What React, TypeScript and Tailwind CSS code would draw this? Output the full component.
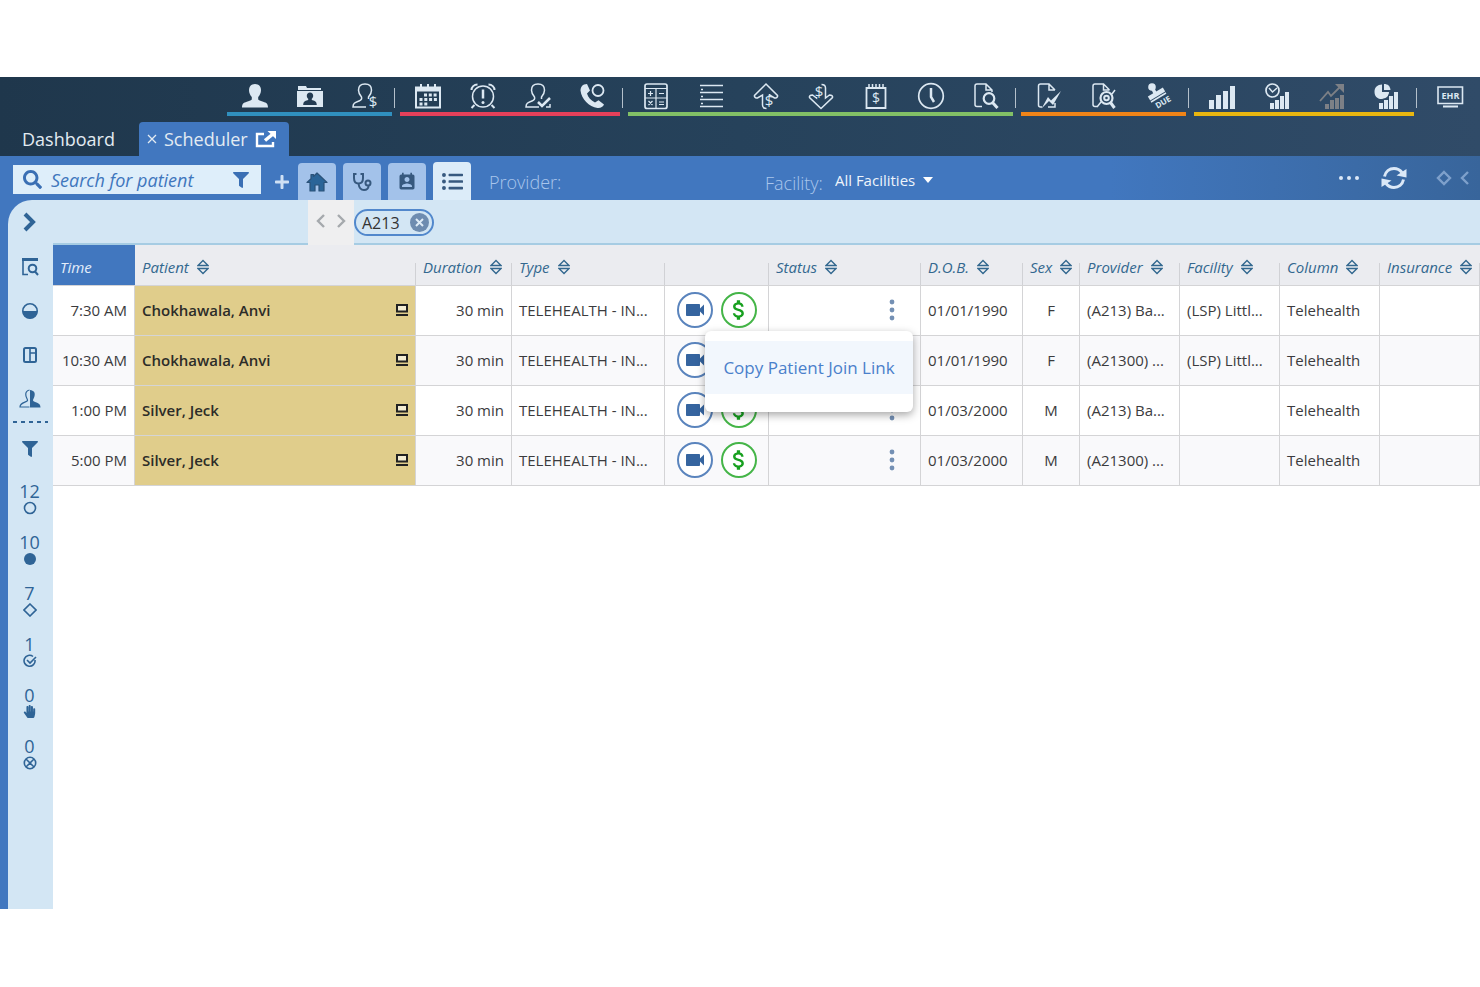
import type { ReactNode } from 'react';
import { FaFilter, FaHandPaper, FaListUl, FaPlus, FaSearch } from 'react-icons/fa';
import { MdAttachMoney, MdPermContactCalendar, MdVideocam } from 'react-icons/md';

type NavItem = { label: string; icon: ReactNode; dim?: boolean };
type NavGroup = { line: string; items: NavItem[] };

type Appointment = {
  time: string;
  patient: string;
  dob: string;
  sex: string;
  provider: string;
  facility: string;
};

const outlinePerson = 'M14 2c-4 0-6.500 2.500-6.500 6.200c0 3 1.500 5 3 6.800c.5 1.500 0 3-2.500 4c-4 1.500-6 2-6 6h13';
const outlinePersonRight = 'M14 2c4 0 6.500 2.500 6.500 6.200c0 3-1.500 5-3 6.800v2';

function Dollar({ x, y, size = 14 }: { x: number; y: number; size?: number }) {
  return (
    <text x={x} y={y} fontSize={size} textAnchor="middle" fill="currentColor" stroke="none">
      $
    </text>
  );
}

function Bars({ x = 6, y = 26, w = 3, step = 5, heights }: { x?: number; y?: number; w?: number; step?: number; heights: number[] }) {
  return (
    <>
      {heights.map((h, i) => (
        <rect key={i} x={x + i * step} y={y - h} width={w} height={h} fill="currentColor" stroke="none" />
      ))}
    </>
  );
}

const groups: NavGroup[] = [
  {
    line: 'border-[#3090bf]',
    items: [
      {
        label: 'Patient',
        icon: (
          <path
            fill="currentColor"
            stroke="none"
            d="M14 2c-4 0-6 2.800-6 6.200c0 3 1.300 5 2.800 6.800v2.500c-1 1-3 1.500-5 2.200c-3.300 1-4.800 2-4.800 5.800h26c0-3.800-1.500-4.800-4.800-5.800c-2-.7-4-1.200-5-2.200V15c1.500-1.800 2.800-3.800 2.800-6.800C20 4.800 18 2 14 2z"
          />
        ),
      },
      {
        label: 'Patient folder',
        icon: (
          <>
            <path fill="currentColor" stroke="none" d="M2 7V4h8l1 2h14v2H2zM1 9h26v16H1z" />
            <path fill="#233c53" stroke="none" d="M14 10.500c-2 0-3.200 1.300-3.200 3.200c0 1.500.6 2.300 1.400 3v1.300c-2 .6-5 1-5 5h13.600c0-4-3-4.400-5-5v-1.300c.7-.7 1.400-1.500 1.400-3c0-1.900-1.200-3.200-3.200-3.200z" />
          </>
        ),
      },
      {
        label: 'Patient balance',
        icon: (
          <>
            <path d={outlinePerson} />
            <path d={outlinePersonRight} />
            <Dollar x={22} y={25} size={15} />
          </>
        ),
      },
    ],
  },
  {
    line: 'border-[#e5405a]',
    items: [
      {
        label: 'Calendar',
        icon: (
          <>
            <path d="M2 5.500h24v20H2z" strokeWidth="2" />
            <path d="M2 7.500h24" strokeWidth="4" />
            <path d="M7 2v5M14 2v5M21 2v5" strokeWidth="2" />
            <path d="M10 13h13M5.500 17.500h17.500M5.500 22h8" strokeWidth="3" strokeDasharray="3 1.800" />
          </>
        ),
      },
      {
        label: 'Reminders',
        icon: (
          <>
            <circle cx="14" cy="14.500" r="10.500" />
            <path d="M2.500 8c0-3 2.500-5.500 6-5.500M25.500 8c0-3-2.500-5.500-6-5.500M5.500 23l-3 3M22.500 23l3 3" strokeWidth="2" />
            <path d="M14 7.500v9" strokeWidth="2.500" />
            <circle cx="14" cy="20.500" r="1.500" fill="currentColor" stroke="none" />
          </>
        ),
      },
      {
        label: 'Check in',
        icon: (
          <>
            <path d={outlinePerson} />
            <path d={outlinePersonRight} />
            <path d="M14 20l4 4l8-8" strokeWidth="2.500" />
            <path d="M22 25h4v-3" />
          </>
        ),
      },
      {
        label: 'Calls',
        icon: (
          <>
            <path
              fill="currentColor"
              stroke="none"
              d="M5 2.500c-2.500 1-3.500 3.500-3.500 6C2.500 17 10 25 18.500 26c3 .3 5.500-1 6.500-3.500l-5.500-4.300l-3.500 2.300C12 18.500 9 15.500 8 11.500l3-3L8 2z"
            />
            <circle cx="19" cy="8.500" r="5.500" strokeWidth="1.800" />
          </>
        ),
      },
    ],
  },
  {
    line: 'border-[#82c066]',
    items: [
      {
        label: 'Charges',
        icon: (
          <>
            <rect x="3" y="2" width="22" height="24.500" rx="2" strokeWidth="1.700" />
            <path d="M3 6.500h22M14 6.500v20M3 16h22M6 11.500h5M8.500 9v5M17 11.500h5M6.500 19l4 4M10.500 19l-4 4M17 20h5M17 22.500h5" strokeWidth="1.200" />
          </>
        ),
      },
      {
        label: 'Ledger',
        icon: (
          <>
            <path d="M3 3.500h23M3 10.500h23M3 17.500h23M3 24.500h23" strokeWidth="1.700" />
            <path d="M4 7.500h2M4 14.500h2M4 21.500h2" strokeWidth="1.500" />
          </>
        ),
      },
      {
        label: 'Credits',
        icon: (
          <>
            <path d="M14.500 26.500c-3 0-4-1-4-3.500v-10l-5 3c-2 0-3.500-1-3-2.500L14 2l11.500 11.500c.5 1.500-1 2.500-3 2.500l-5-3v-1" />
            <Dollar x={17} y={24} size={15} />
          </>
        ),
      },
      {
        label: 'Debits',
        icon: (
          <>
            <path d="M14.500 2.500c3 0 4 1 4 3.500v10l4-3c2 0 3.500 1 3 2.500L14 26.500L2.500 15.500c-.5-1.500 1-2.500 3-2.500l4 3v-1" />
            <Dollar x={12} y={15} size={15} />
          </>
        ),
      },
      {
        label: 'Statements',
        icon: (
          <>
            <path d="M4.500 6h19v20h-19z" strokeWidth="1.800" />
            <path d="M7 2v5M10.500 2v5M14 2v5M17.500 2v5M21 2v5" />
            <Dollar x={14} y={21} size={14} />
          </>
        ),
      },
      {
        label: 'Time clock',
        icon: (
          <>
            <circle cx="14" cy="14" r="12.300" strokeWidth="1.700" />
            <path d="M14 6v9l3 5" strokeWidth="2.500" />
          </>
        ),
      },
      {
        label: 'Find claim',
        icon: (
          <>
            <path d="M10 24.500H5c-1.500 0-2-.5-2-2V4c0-1.500.5-2 2-2h9l6 6v2M14 2v6h6" />
            <circle cx="17" cy="16.500" r="5.300" strokeWidth="2.200" />
            <path d="M20.500 20.500l5 5.500" strokeWidth="3" />
          </>
        ),
      },
    ],
  },
  {
    line: 'border-[#f08418]',
    items: [
      {
        label: 'Edit claim',
        icon: (
          <>
            <path d="M7 25H5.500c-1.500 0-2-.5-2-2V4c0-1.500.5-2 2-2H14l6 6M14 2v6h6M13 25h7v-4" />
            <path fill="currentColor" stroke="none" d="M6.500 26.500l6.500-11.500l3 3.500L26 9l-8 14l-4-4z" />
          </>
        ),
      },
      {
        label: 'Track claim',
        icon: (
          <>
            <path d="M7 24.500H5c-1.500 0-2-.5-2-2V4c0-1.500.5-2 2-2h8.500l6 6M13.500 2v6h6M7 25l4-5M22 12l3-4" />
            <circle cx="16.500" cy="16" r="6" strokeWidth="2.200" />
            <circle cx="16.500" cy="16" r="2.300" strokeWidth="2" />
            <path d="M20.500 20.500l4 5.500" strokeWidth="3" />
          </>
        ),
      },
      {
        label: 'Amount due',
        icon: (
          <>
            <circle cx="7" cy="5" r="3.800" fill="currentColor" stroke="none" />
            <path d="M8 7l3 6" strokeWidth="3.500" />
            <path d="M4 16.500L19 7.500" strokeWidth="4.500" />
            <path d="M6 20L21 11" strokeWidth="1.500" />
            <text x="18" y="23" fontSize="8" fontWeight="700" textAnchor="middle" fill="currentColor" stroke="none" transform="rotate(-31 18 20)">
              DUE
            </text>
          </>
        ),
      },
    ],
  },
  {
    line: 'border-[#e9b610]',
    items: [
      { label: 'Reports', icon: <Bars x={1} y={27} w={5} step={7} heights={[9, 14, 18, 23]} /> },
      {
        label: 'Scheduled reports',
        icon: (
          <>
            <circle cx="9.500" cy="8.500" r="6.500" strokeWidth="1.700" />
            <path d="M6 6l3.500 4L14 6" />
            <Bars x={7} y={27} w={4} step={5} heights={[6, 9, 13, 17]} />
          </>
        ),
      },
      {
        label: 'Trends',
        dim: true,
        icon: (
          <>
            <Bars x={7} y={27} w={4} step={5} heights={[5, 9, 11, 14]} />
            <path d="M2 19l8-9l3 4L23 4" strokeWidth="1.800" />
            <path d="M17 2h9v9z" fill="currentColor" stroke="none" />
          </>
        ),
      },
      {
        label: 'Analytics',
        icon: (
          <>
            <path fill="currentColor" stroke="none" d="M9 2.500v7.500h7c0 4-3 7-7.500 7s-7-3-7-7.300S4.500 2.500 9 2.500z" />
            <path fill="currentColor" stroke="none" d="M11 2c4 0 6 2 6.500 6H11z" />
            <path stroke="#2c4864" strokeWidth="1" d="M10.500 18.500v-1.500h5v-4h5v-4" />
            <Bars x={6} y={27} w={4} step={5} heights={[6, 9, 13, 17]} />
          </>
        ),
      },
    ],
  },
];

const columns = [
  { label: 'Time', width: 'w-[82px]' },
  { label: 'Patient', width: 'w-[281px]' },
  { label: 'Duration', width: 'w-[96px]' },
  { label: 'Type', width: 'w-[153px]' },
  { label: '', width: 'w-[104px]' },
  { label: 'Status', width: 'w-[152px]' },
  { label: 'D.O.B.', width: 'w-[102px]' },
  { label: 'Sex', width: 'w-[57px]' },
  { label: 'Provider', width: 'w-[100px]' },
  { label: 'Facility', width: 'w-[100px]' },
  { label: 'Column', width: 'w-[100px]' },
  { label: 'Insurance', width: 'w-[100px]' },
];

const appointments: Appointment[] = [
  { time: '7:30 AM', patient: 'Chokhawala, Anvi', dob: '01/01/1990', sex: 'F', provider: '(A213) Ba...', facility: '(LSP) Littl...' },
  { time: '10:30 AM', patient: 'Chokhawala, Anvi', dob: '01/01/1990', sex: 'F', provider: '(A21300) ...', facility: '(LSP) Littl...' },
  { time: '1:00 PM', patient: 'Silver, Jeck', dob: '01/03/2000', sex: 'M', provider: '(A213) Ba...', facility: '' },
  { time: '5:00 PM', patient: 'Silver, Jeck', dob: '01/03/2000', sex: 'M', provider: '(A21300) ...', facility: '' },
];

const counters: { label: string; count: number; icon: ReactNode }[] = [
  { label: 'Scheduled', count: 12, icon: <circle cx="7" cy="7" r="5.500" /> },
  { label: 'Arrived', count: 10, icon: <circle cx="7" cy="7" r="6" fill="currentColor" stroke="none" /> },
  { label: 'In room', count: 7, icon: <path d="M7 1l6 6l-6 6l-6-6z" /> },
  { label: 'Completed', count: 1, icon: <path d="M12 6A5.500 5.500 0 1 1 10 2.500M4 6l3 3l6-6" /> },
  { label: 'On hold', count: 0, icon: <FaHandPaper size={13} stroke="none" /> },
  { label: 'Cancelled', count: 0, icon: <path d="M7 1.300a5.700 5.700 0 1 0 0 11.400a5.700 5.700 0 1 0 0-11.400M3.500 3.500l7 7M10.500 3.500l-7 7" /> },
];

function NavButton({ item }: { item: NavItem }) {
  return (
    <button aria-label={item.label} className={`w-[55px] h-8 grid place-items-center ${item.dim ? 'text-[#7d8086]' : 'text-[#dce8f2]'}`}>
      <svg width="28" height="28" viewBox="0 0 28 28" fill="none" stroke="currentColor" strokeWidth="1.500" className="overflow-visible">
        {item.icon}
      </svg>
    </button>
  );
}

function Divider() {
  return (
    <div className="w-2 pl-0.5 pt-[11px]">
      <div className="w-px h-5 bg-[#b4c0cb]" />
    </div>
  );
}

function SortIcon() {
  return (
    <svg width="12" height="16" viewBox="0 0 12 16" fill="none" stroke="currentColor" strokeWidth="1.400" className="shrink-0">
      <path d="M1 6.500L6 1.500l5 5zM1 9.500l5 5l5-5z" />
    </svg>
  );
}

function SideButton({ label, children }: { label: string; children: ReactNode }) {
  return (
    <button aria-label={label} className="h-11 w-full pr-0.5 grid place-items-center">
      <svg width="22" height="22" viewBox="0 0 22 22" fill="none" stroke="currentColor" strokeWidth="1.600">
        {children}
      </svg>
    </button>
  );
}

function TopBar() {
  return (
    <header className="bg-linear-to-r from-[#1f374c] via-[#26425b] to-[#304b68]">
      <nav className="flex justify-end h-[39px] pr-[3px]">
        {groups.map((group) => (
          <div key={group.line} className="flex">
            <div className={`flex pt-[3px] border-b-4 ${group.line}`}>
              {group.items.map((item) => (
                <NavButton key={item.label} item={item} />
              ))}
            </div>
            <Divider />
          </div>
        ))}
        <button aria-label="EHR" className="w-[55px] h-[38px] grid place-items-center text-[#dce8f2]">
          <svg width="28" height="28" viewBox="0 0 28 28" fill="none" stroke="currentColor" strokeWidth="1.600">
            <path d="M2 5h24.500v16.500H2z" />
            <path d="M7 24.500h15" strokeWidth="2" />
            <text x="14.500" y="16.500" fontSize="9" fontWeight="700" textAnchor="middle" fill="currentColor" stroke="none">
              EHR
            </text>
          </svg>
        </button>
      </nav>
      <div className="flex items-end h-10 pl-[22px] text-lg leading-6 text-[#e3ebf2]">
        <button className="h-[34px] w-[117px] text-left">Dashboard</button>
        <div className="flex items-center h-[34px] w-[150px] px-2 bg-[#4177bf] rounded-t-sm">
          <button aria-label="Close Scheduler" className="mr-[7px]">
            <svg width="10" height="10" viewBox="0 0 10 10" stroke="currentColor" strokeWidth="1.300">
              <path d="M1 1l8 8M9 1L1 9" />
            </svg>
          </button>
          <button>Scheduler</button>
          <button aria-label="Open in new window" className="ml-auto mr-1 text-white">
            <svg width="22" height="18" viewBox="0 0 22 18" fill="none" stroke="currentColor" strokeWidth="2.400">
              <path d="M9 4H2v12h16v-4" />
              <path d="M10 10.500L18 4" strokeWidth="3.500" />
              <path d="M12.500 1h8.500v8z" fill="currentColor" stroke="none" />
            </svg>
          </button>
        </div>
      </div>
    </header>
  );
}

function Toolbar() {
  return (
    <div className="flex items-end h-11 pl-[13px] pr-2.5 text-white">
      <div className="self-start mt-[9px] flex items-center w-[248px] h-[29px] pl-2.5 pr-3 bg-[#deeefa] text-[#3a6fb4]">
        <FaSearch size={19} className="shrink-0" />
        <input
          aria-label="Search for patient"
          placeholder="Search for patient"
          className="flex-1 min-w-0 ml-[9px] text-lg leading-6 italic outline-none placeholder:text-[#3f76bd]"
        />
        <button aria-label="Filter patients">
          <FaFilter size={16} />
        </button>
      </div>
      <button aria-label="Add" className="w-[37px] h-9 pl-1 grid place-items-center text-[#cfe0f4]">
        <FaPlus size={16} />
      </button>
      <div className="flex items-end gap-[7px] text-[#37597f]">
        <button aria-label="Home" className="w-[38px] h-[37px] grid place-items-center rounded-t-sm bg-[#a3c2ea]">
          <svg width="22" height="22" viewBox="0 0 22 22" fill="#2a6498" stroke="#2b5279" strokeWidth="1.200" strokeLinejoin="round">
            <path d="M11 2l10 9.500h-3V20h-5v-6H9v6H4v-8.500H1L5 7.700V3.500h2.500v2z" />
          </svg>
        </button>
        <button aria-label="Clinical" className="w-[38px] h-[37px] grid place-items-center rounded-t-sm bg-[#a3c2ea]">
          <svg width="20" height="20" viewBox="0 0 20 20" fill="none" stroke="currentColor" strokeWidth="2">
            <path d="M4.500 2H2v4c0 3.500 2 5.500 4.500 5.500S11 9.500 11 6V2H8.500" />
            <path d="M6.500 11.500C7 15.500 9 18 12 18s4.500-2 4.500-4" />
            <circle cx="16" cy="11" r="2.500" />
          </svg>
        </button>
        <button aria-label="Contacts" className="w-[38px] h-[37px] grid place-items-center rounded-t-sm bg-[#a3c2ea]">
          <MdPermContactCalendar size={20} />
        </button>
        <button aria-label="List" className="w-[38px] h-[38px] grid place-items-center rounded-t-sm bg-[#dcecf9]">
          <FaListUl size={21} />
        </button>
      </div>
      <span className="w-[276px] ml-[18px] pb-1.5 text-lg leading-6 font-light text-[#a9c6ec]">Provider:</span>
      <label htmlFor="facility" className="pb-[5px] text-lg leading-6 font-light text-[#a9c6ec]">
        Facility:
      </label>
      <div className="flex items-center pb-2 ml-3">
        <select id="facility" className="appearance-none text-[15px] leading-6 text-[#eef4fb] outline-none">
          <option>All Facilities</option>
        </select>
        <svg width="10" height="6" viewBox="0 0 10 6" fill="currentColor" className="ml-[7px]">
          <path d="M0 0h10L5 6z" />
        </svg>
      </div>
      <div className="flex items-center gap-5 ml-auto pb-2 text-[#dbe8f7]">
        <button aria-label="More">
          <svg width="22" height="6" viewBox="0 0 22 6" fill="currentColor">
            <circle cx="3" cy="3" r="2" />
            <circle cx="11" cy="3" r="2" />
            <circle cx="19" cy="3" r="2" />
          </svg>
        </button>
        <button aria-label="Refresh" className="mr-2">
          <svg width="28" height="28" viewBox="0 0 28 28" fill="none" stroke="currentColor" strokeWidth="3">
            <path d="M4.500 12.500C5.500 7.500 9.500 4.500 14 4.500c3.500 0 6 1.500 8 4M23.500 15.500c-1 5-5 8-9.500 8c-3.500 0-6-1.500-8-4" />
            <path d="M26.500 5v8.500l-10-2zM1.500 23v-8.500l10 2z" fill="currentColor" stroke="none" />
          </svg>
        </button>
        <div className="flex items-center gap-2 text-[#7ea0cb]">
          <button aria-label="Expand">
            <svg width="16" height="16" viewBox="0 0 16 16" fill="none" stroke="currentColor" strokeWidth="2.400">
              <path d="M8 2l6 6l-6 6l-6-6z" />
            </svg>
          </button>
          <button aria-label="Previous">
            <svg width="10" height="14" viewBox="0 0 10 14" fill="none" stroke="currentColor" strokeWidth="2.400">
              <path d="M8 1L2 7l6 6" />
            </svg>
          </button>
        </div>
      </div>
    </div>
  );
}

function Sidebar() {
  return (
    <aside className="w-[45px] shrink-0 text-[#2f6496]">
      <button aria-label="Open panel" className="w-full h-[45px] pr-0.5 pb-0.5 grid place-items-center">
        <svg width="14" height="20" viewBox="0 0 14 20" fill="none" stroke="currentColor" strokeWidth="4">
          <path d="M2 2l8 8l-8 8" />
        </svg>
      </button>
      <SideButton label="Find appointment">
        <path d="M3 3.500h16" strokeWidth="3" />
        <path d="M4 4v14.500h5" />
        <circle cx="13.500" cy="12.500" r="3.800" strokeWidth="2" />
        <path d="M16 15.500l3 3.500" strokeWidth="2" />
      </SideButton>
      <SideButton label="Status">
        <circle cx="11" cy="11" r="7.200" />
        <path d="M3.500 11h15a7.500 7.500 0 0 1-15 0z" fill="currentColor" stroke="none" />
      </SideButton>
      <SideButton label="Layout">
        <rect x="5" y="4" width="12" height="14" rx="1.500" strokeWidth="2" />
        <path d="M11 4v14M11 9h6" />
      </SideButton>
      <SideButton label="Patient mode">
        <path d="M10.500 2C8 2.500 6.500 4 6.800 7c.2 3 2 4 1.700 5.500C8 14.500 1 14 1 19h9.500" strokeWidth="1.200" />
        <path d="M11 2c4 .5 5 2.500 4.700 5c-.2 2.500-1.700 4-1.700 5.500c1 2 7.500 1.500 7.500 7H11z" fill="currentColor" stroke="none" />
      </SideButton>
      <svg className="block w-full h-0.5" stroke="currentColor" strokeWidth="2" strokeDasharray="4 4">
        <line x1="5" y1="1" x2="40" y2="1" />
      </svg>
      <button aria-label="Filter" className="w-full h-[54px] pr-0.5 pb-0.5 grid place-items-center">
        <FaFilter size={16} />
      </button>
      {counters.map((c) => (
        <button key={c.label} aria-label={c.label} className="w-full h-[51px] pr-0.5 flex flex-col items-center pt-1">
          <span className="text-lg leading-5">{c.count}</span>
          <svg width="14" height="14" viewBox="0 0 14 14" fill="none" stroke="currentColor" strokeWidth="1.600">
            {c.icon}
          </svg>
        </button>
      ))}
    </aside>
  );
}

function FilterStrip() {
  return (
    <div className="flex h-[45px] bg-[#d3e6f4]">
      <div className="w-[255px] border-b-2 border-[#a6cce3]" />
      <div className="w-[46px] flex justify-center gap-2.5 pt-[14px] bg-[#efeff0] text-[#a5a9ad]">
        <button aria-label="Previous provider" className="self-start">
          <svg width="10" height="14" viewBox="0 0 10 14" fill="none" stroke="currentColor" strokeWidth="2.400">
            <path d="M8 1L2 7l6 6" />
          </svg>
        </button>
        <button aria-label="Next provider" className="self-start">
          <svg width="10" height="14" viewBox="0 0 10 14" fill="none" stroke="currentColor" strokeWidth="2.400">
            <path d="M2 1l6 6l-6 6" />
          </svg>
        </button>
      </div>
      <div className="flex-1 flex items-start pt-[9px] border-b-2 border-[#a6cce3]">
        <div className="flex items-center justify-between w-20 h-[27px] pl-1.5 pr-[3px] rounded-full border-2 border-[#5288cc] text-[#333]">
          <span className="text-base leading-5">A213</span>
          <button aria-label="Remove A213">
            <svg width="19" height="19" viewBox="0 0 19 19" stroke="#deebf6" strokeWidth="2">
              <circle cx="9.500" cy="9.500" r="9.500" fill="#6e8cb0" stroke="none" />
              <path d="M6 6l7 7M13 6l-7 7" />
            </svg>
          </button>
        </div>
      </div>
    </div>
  );
}

function AppointmentRow({ item, menuOpen }: { item: Appointment; menuOpen?: boolean }) {
  const cell = 'px-[7px] pb-0.5 border-r border-b border-[#d4d4d6] whitespace-nowrap';
  return (
    <tr className="h-[50px] bg-white even:bg-[#f9f9fb]">
      <td className={`${cell} text-right`}>{item.time}</td>
      <td className={`${cell} bg-[#e0cd8b] text-[#2c2c28] font-semibold`}>
        <div className="flex items-center justify-between">
          {item.patient}
          <svg width="12" height="12" viewBox="0 0 12 12" fill="none" stroke="#222" strokeWidth="2">
            <path d="M1 1h10v6.500H1z" fill="#f3ecd2" />
            <path d="M0 11h12" />
          </svg>
        </div>
      </td>
      <td className={`${cell} text-right`}>30 min</td>
      <td className={cell}>TELEHEALTH - IN...</td>
      <td className={cell}>
        <div className="flex justify-center gap-2">
          <button aria-label="Start video visit" className="size-9 shrink-0 grid place-items-center rounded-full border-2 border-[#5a84bd] bg-white text-[#35649f]">
            <MdVideocam size={24} />
          </button>
          <button aria-label="Payment" className="size-9 shrink-0 grid place-items-center rounded-full border-2 border-[#45b548] bg-white text-[#17a01f]">
            <MdAttachMoney size={26} />
          </button>
        </div>
      </td>
      <td className={`${cell} relative`}>
        <button aria-label="More actions" className="flex ml-auto mr-[18px] text-[#7490b4]">
          <svg width="6" height="22" viewBox="0 0 6 22" fill="currentColor">
            <circle cx="3" cy="3" r="2.400" />
            <circle cx="3" cy="11" r="2.400" />
            <circle cx="3" cy="19" r="2.400" />
          </svg>
        </button>
        {menuOpen && (
          <div className="absolute z-10 right-[7px] top-[45px] w-52 pt-2.5 pb-[18px] bg-white rounded-md shadow-[0_3px_8px_rgba(0,0,0,0.35)]">
            <button className="w-full h-[53px] bg-[#f2f7fd] text-[#4a80cb] text-[17px] leading-6">Copy Patient Join Link</button>
          </div>
        )}
      </td>
      <td className={cell}>{item.dob}</td>
      <td className={`${cell} text-center`}>{item.sex}</td>
      <td className={cell}>{item.provider}</td>
      <td className={cell}>{item.facility}</td>
      <td className={cell}>Telehealth</td>
      <td className={cell}></td>
    </tr>
  );
}

function Schedule() {
  return (
    <table className="w-full table-fixed border-separate border-spacing-0 text-[15px] leading-5 text-[#3b3b3d]">
      <thead>
        <tr className="h-[41px] bg-[#ebecf0] text-[#33688f] italic">
          {columns.map((c, i) => (
            <th key={c.label} className={`${c.width} p-0 border-b border-[#d4d4d6] text-left align-bottom font-normal ${i === 0 ? 'bg-[#4177bf] text-[#e4eefa]' : ''}`}>
              <div className={`flex items-start h-[22px] px-[7px] ${i === 0 ? '' : 'border-r border-[#d0d1d5]'}`}>
                <span className="-mt-1.5 flex items-center gap-2 whitespace-nowrap">
                  {c.label}
                  {i > 0 && c.label && <SortIcon />}
                </span>
              </div>
            </th>
          ))}
        </tr>
      </thead>
      <tbody>
        {appointments.map((item, i) => (
          <AppointmentRow key={item.time} item={item} menuOpen={i === 0} />
        ))}
      </tbody>
    </table>
  );
}

export default function App() {
  return (
    <div className="min-h-screen bg-white py-[77px] font-['Open_Sans','Noto_Sans',sans-serif]">
      <TopBar />
      <div className="bg-linear-to-r from-[#4177bf] from-75% to-[#38659b]">
        <Toolbar />
        <div className="pl-2">
          <div className="flex min-h-[709px] overflow-hidden rounded-tl-[24px] bg-[#d3e6f4]">
            <Sidebar />
            <main className="flex-1 min-w-0 bg-white">
              <FilterStrip />
              <Schedule />
            </main>
          </div>
        </div>
      </div>
    </div>
  );
}
